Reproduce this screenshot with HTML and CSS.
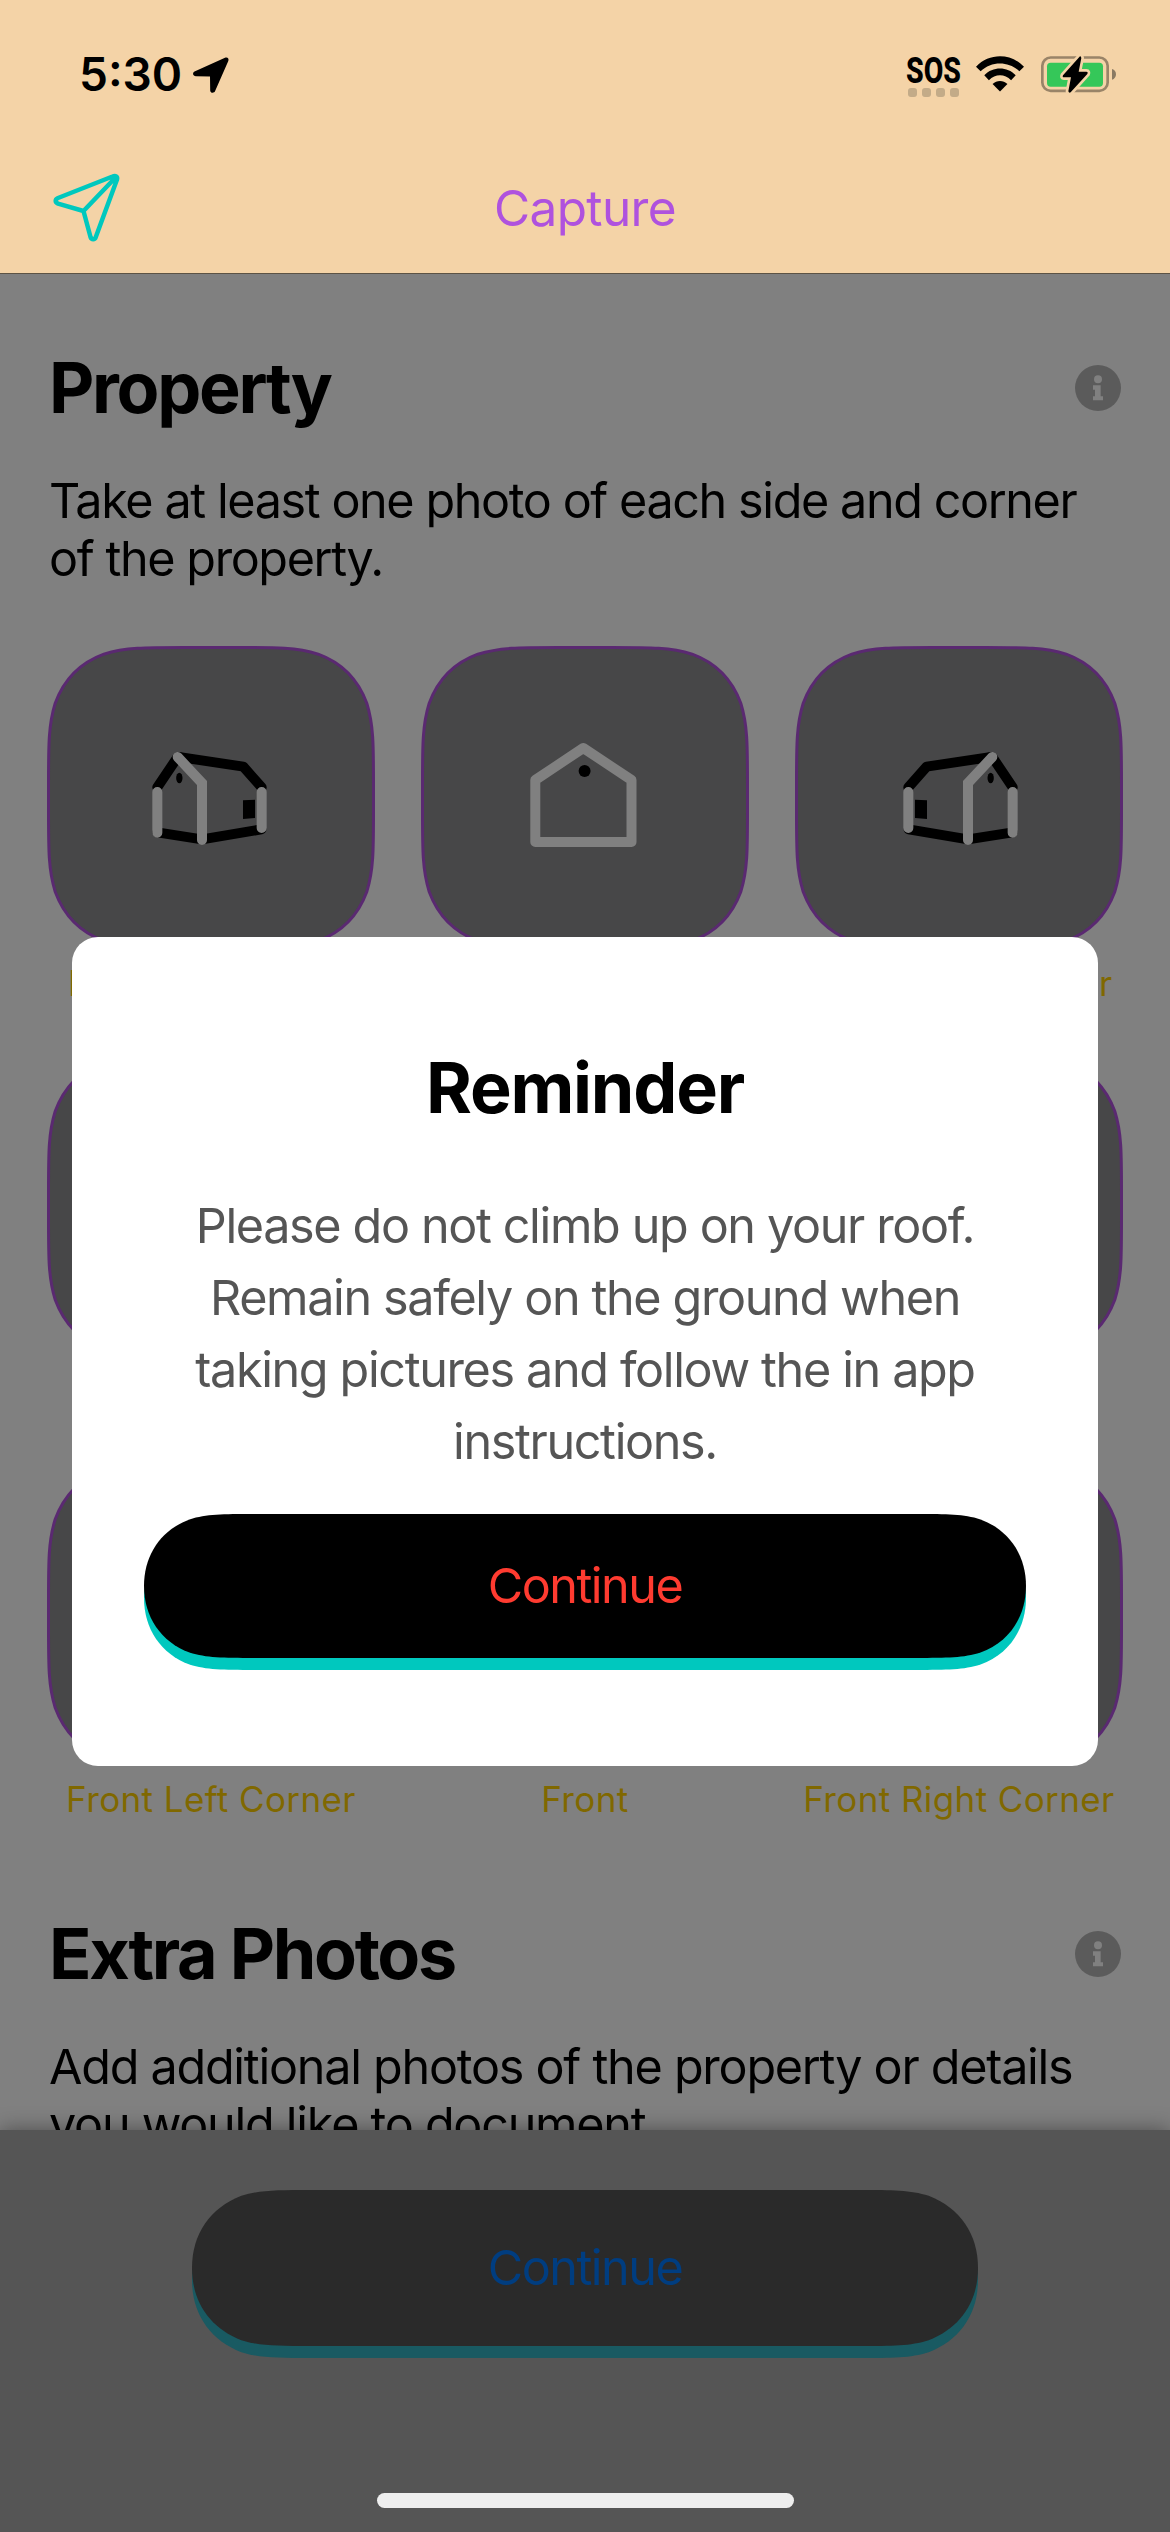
FILE: index.html
```html
<!DOCTYPE html>
<html lang="en">
<head>
<meta charset="utf-8">
<title>Capture</title>
<link rel="stylesheet" href="styles.css">
</head>
<body>
<svg class="defs" aria-hidden="true">
  <symbol id="tile" viewBox="0 0 328 303">
    <path class="tile-shape" d="M137.6 1.5H190.4C230 1.5 249.8 1.5 271.2 8.2C294.4 16.7 311.3 34.1 319.8 57.3C326.5 78.7 326.5 98.5 326.5 138V165C326.5 204.5 326.5 224.3 319.8 245.7C311.3 268.9 294.4 286.3 271.2 294.8C249.8 301.5 230 301.5 190.4 301.5H137.6C98 301.5 78.2 301.5 56.8 294.8C33.6 286.3 16.7 268.9 8.2 245.7C1.5 224.3 1.5 204.5 1.5 165V138C1.5 98.5 1.5 78.7 8.2 57.3C16.7 34.1 33.6 16.7 56.8 8.2C78.2 1.5 98 1.5 137.6 1.5Z"/>
  </symbol>
  <symbol id="house-corner" viewBox="0 0 328 303">
    <g transform="translate(83 84) scale(.33333)">
      <path class="wall-dark" d="M82 172L143 81L155 82L340 110L395 172M82 307L216 328L394 298"/>
      <ellipse cx="148" cy="144" rx="9.500" ry="16"/>
      <path d="M339 211L375 209V264L339 267Z"/>
      <path class="wall-light" d="M82 186V308M143 81L216 159V330M395 186V294"/>
    </g>
  </symbol>
  <symbol id="house-front" viewBox="0 0 328 303">
    <path class="front-wall" d="M162.300 102L114.300 134V196H210.500V134Z"/>
    <circle cx="163.600" cy="125" r="6"/>
  </symbol>
  <symbol id="info" viewBox="0 0 138 138">
    <circle class="info-disc" cx="69" cy="69" r="69"/>
    <circle class="info-mark" cx="69" cy="43" r="12"/>
    <path class="info-mark" d="M54 61H77V94H84V106H54V94H60V74H54Z"/>
  </symbol>
</svg>

<header class="top">
  <div class="status">
    <div class="clock">
      <span class="time">5:30</span>
      <svg class="location" viewBox="0 0 36 36"><path d="M1.500 14.500L32 .7C34.500 -.2 36.300 1.500 35.300 4L22 34.300C21 36.500 17.300 36.200 17.200 33.400L17 19.400L3 19.200C-.3 19 -.8 15.700 1.500 14.500Z"/></svg>
    </div>
    <div class="signals">
      <svg class="sos" viewBox="0 0 56 44">
        <text class="sos-text" x="0" y="27" textLength="55" lengthAdjust="spacingAndGlyphs">SOS</text>
        <g class="sos-dots"><rect x="2" y="32" width="9" height="9" rx="3"/><rect x="16" y="32" width="9" height="9" rx="3"/><rect x="30" y="32" width="9" height="9" rx="3"/><rect x="44" y="32" width="9" height="9" rx="3"/></g>
      </svg>
      <svg class="wifi" viewBox="0 0 145 108">
        <path d="M0 32C40 -10 105 -10 145 32L131 46C99 14 46 14 14 46Z"/>
        <path d="M25 58C51 31 94 31 120 58L106 73C87 53 58 53 39 73Z"/>
        <path d="M50 84C63 72 82 72 95 84L72.500 107Z"/>
      </svg>
      <svg class="battery" viewBox="0 0 225 111">
        <rect class="battery-case" x="4" y="4.500" width="196" height="100" rx="25"/>
        <path class="battery-nub" d="M213 39C229 43 229 67 213 71Z"/>
        <rect class="battery-level" x="18" y="20" width="168" height="72" rx="11"/>
        <path class="bolt" d="M117 1L66 58Q63 64 69 64H90L82 106Q84 112 89 109L139 54Q142 47 136 47H113L121 6Q120 0 117 1Z"/>
      </svg>
    </div>
  </div>
  <div class="nav">
    <svg class="plane" viewBox="0 0 72 72"><path d="M60.500 4.500L6 26C2.800 27.500 3 30.300 6 31.600L31.500 39L38.500 65C39.500 68 42.800 68 43.800 65L65 7.500C65.800 4.500 63.500 3.200 60.500 4.500ZM64 5L31.500 39"/></svg>
    <h1 class="nav-title">Capture</h1>
  </div>
</header>

<main class="content">
  <div class="heading">
    <h2 class="title">Property</h2>
    <svg class="info"><use href="#info"/></svg>
  </div>
  <p class="copy">Take at least one photo of each side and corner<br>of the property.</p>
  <div class="grid">
    <div class="cell"><svg class="tile"><use href="#tile"/><use href="#house-corner"/></svg><span class="label">Back Left Corner</span></div>
    <div class="cell"><svg class="tile"><use href="#tile"/><use href="#house-front"/></svg></div>
    <div class="cell"><svg class="tile"><use href="#tile"/><use class="mirror" href="#house-corner"/></svg><span class="label">Back Right Corner</span></div>
    <div class="cell"><svg class="tile"><use href="#tile"/></svg></div>
    <div class="cell"></div>
    <div class="cell"><svg class="tile"><use href="#tile"/></svg></div>
    <div class="cell"><svg class="tile"><use href="#tile"/></svg><span class="label">Front Left Corner</span></div>
    <div class="cell"><svg class="tile"><use href="#tile"/></svg><span class="label">Front</span></div>
    <div class="cell"><svg class="tile"><use href="#tile"/></svg><span class="label">Front Right Corner</span></div>
  </div>
  <div class="heading heading-extra">
    <h2 class="title">Extra Photos</h2>
    <svg class="info"><use href="#info"/></svg>
  </div>
  <p class="copy copy-extra">Add additional photos of the property or details<br>you would like to document.</p>
</main>

<footer class="footer">
  <div class="footer-button">
    <svg class="button-shape" viewBox="0 0 786 168">
      <path class="footer-shadow" transform="translate(0 12)" d="M119 0H667C701 0 718 0 736.700 5.800C768 18 786 44 786 78C786 112 768 138 736.700 150.200C718 156 701 156 667 156H119C85 156 68 156 49.300 150.200C18 138 0 112 0 78C0 44 18 18 49.300 5.800C68 0 85 0 119 0Z"/>
      <path class="footer-face" d="M119 0H667C701 0 718 0 736.700 5.800C768 18 786 44 786 78C786 112 768 138 736.700 150.200C718 156 701 156 667 156H119C85 156 68 156 49.300 150.200C18 138 0 112 0 78C0 44 18 18 49.300 5.800C68 0 85 0 119 0Z"/>
    </svg>
    <span class="button-text footer-text">Continue</span>
  </div>
  <div class="home-bar"></div>
</footer>

<section class="modal">
  <h2 class="modal-title">Reminder</h2>
  <p class="modal-copy">Please do not climb up on your roof.<br>Remain safely on the ground when<br>taking pictures and follow the in app<br>instructions.</p>
  <div class="modal-button">
    <svg class="button-shape" viewBox="0 0 882 156">
      <path class="modal-shadow" transform="translate(0 12)" d="M110 0H772C803.600 0 819.500 0 836.500 5.400C865 16 882 41 882 72C882 103 865 128 836.500 138.600C819.500 144 803.600 144 772 144H110C78.400 144 62.500 144 45.500 138.600C17 128 0 103 0 72C0 41 17 16 45.500 5.400C62.500 0 78.400 0 110 0Z"/>
      <path d="M110 0H772C803.600 0 819.500 0 836.500 5.400C865 16 882 41 882 72C882 103 865 128 836.500 138.600C819.500 144 803.600 144 772 144H110C78.400 144 62.500 144 45.500 138.600C17 128 0 103 0 72C0 41 17 16 45.500 5.400C62.500 0 78.400 0 110 0Z"/>
    </svg>
    <span class="button-text modal-text">Continue</span>
  </div>
</section>
</body>
</html>
```
FILE: styles.css
```css
* { box-sizing: border-box; }
body {
  margin: 0;
  width: 1170px;
  height: 2532px;
  display: flex;
  flex-direction: column;
  position: relative;
  overflow: hidden;
  background: #808080;
  color: #000;
  font-family: Inter, "Liberation Sans", sans-serif;
}
h1, h2, p { margin: 0; }
svg { display: block; flex: none; overflow: visible; }
.defs { position: absolute; width: 0; height: 0; }

.top {
  height: 274px;
  flex: none;
  background: #f4d3a7;
  border-bottom: 1px solid #5c5345;
}
.status {
  height: 150px;
  display: flex;
  justify-content: space-between;
  padding: 0 54px 0 79px;
}
.clock { display: flex; gap: 12px; padding-top: 44px; }
.time {
  width: 102px;
  font-size: 46px;
  line-height: 60px;
  font-weight: 600;
  white-space: nowrap;
}
.location { width: 36px; height: 36px; margin-top: 13px; }
.signals { display: flex; padding-top: 56px; }
.sos { width: 56px; height: 44px; margin-right: 14px; }
.sos-text { font: 800 37px Roboto, sans-serif; }
.sos-dots { fill: #c3ab88; }
.wifi { width: 48px; height: 36px; margin-right: 17px; }
.battery { width: 75px; height: 37px; }
.battery-case { fill: none; stroke: #998468; stroke-width: 8; }
.battery-nub { fill: #8a7a63; }
.battery-level { fill: #35c759; }
.bolt { stroke: #f4d3a7; stroke-width: 16; paint-order: stroke; stroke-linejoin: round; }

.nav {
  height: 122px;
  display: grid;
  grid-template-columns: 1fr auto 1fr;
  padding: 0 52px;
}
.plane {
  width: 72px;
  height: 72px;
  margin-top: 22px;
  fill: none;
  stroke: #00c8be;
  stroke-width: 4.500;
  stroke-linejoin: round;
}
.nav-title {
  padding-top: 28px;
  font-size: 49.500px;
  line-height: 60px;
  font-weight: 400;
  letter-spacing: -.6px;
  color: #af52de;
}

.content {
  height: 1856px;
  flex: none;
  overflow: hidden;
  padding: 74px 47px 0;
}
.heading {
  height: 80px;
  display: flex;
  justify-content: space-between;
  align-items: center;
  padding: 0 2px 0 2px;
}
.title {
  font-size: 70px;
  line-height: 80px;
  font-weight: 650;
  letter-spacing: -2.300px;
}
.info { width: 46px; height: 46px; }
.info-disc { fill: #5b5b5b; }
.info-mark { fill: #808080; }
.copy {
  padding: 44px 2px 0;
  height: 218px;
  font-size: 48.500px;
  line-height: 58px;
  letter-spacing: -1.400px;
  white-space: nowrap;
}
.grid {
  display: grid;
  grid-template-columns: repeat(3, 328px);
  grid-auto-rows: 408px;
  column-gap: 46px;
}
.cell { display: flex; flex-direction: column; align-items: center; }
.tile { width: 328px; height: 303px; }
.tile-shape { fill: #474748; stroke: #5a2971; stroke-width: 3; }
.wall-dark { fill: none; stroke: #000; stroke-width: 30; stroke-linejoin: round; stroke-linecap: round; }
.wall-light { fill: none; stroke: #808080; stroke-width: 30; stroke-linejoin: miter; stroke-linecap: round; }
.front-wall { fill: none; stroke: #808080; stroke-width: 10; stroke-linejoin: round; }
.mirror { transform: translateX(328px) scaleX(-1); }
.label {
  padding-top: 12px;
  font-size: 35px;
  line-height: 44px;
  letter-spacing: .4px;
  color: #806800;
  white-space: nowrap;
}
.heading-extra { margin-top: 44px; }
.copy-extra { height: auto; letter-spacing: -1.250px; }

.footer {
  flex: 1;
  display: flex;
  flex-direction: column;
  align-items: center;
  justify-content: space-between;
  padding: 60px 0 24px;
  background: #555;
  box-shadow: 0 0 20px rgba(0, 0, 0, .4);
}
.footer-button { display: grid; width: 786px; height: 168px; }
.button-shape { grid-area: 1 / 1; width: 100%; height: 100%; }
.button-text {
  grid-area: 1 / 1;
  justify-self: center;
  font-size: 48.500px;
  line-height: 60px;
  letter-spacing: -1.500px;
}
.footer-text { margin-top: 48px; color: #003d80; }
.footer-shadow { fill: #195a62; }
.footer-face { fill: #2a2a2a; }
.home-bar { width: 417px; height: 15px; border-radius: 8px; background: #eee; }

.modal {
  position: absolute;
  left: 72px;
  top: 937px;
  width: 1026px;
  height: 829px;
  padding: 109px 72px 0;
  border-radius: 26px;
  background: #fff;
  text-align: center;
}
.modal-title {
  font-size: 70px;
  line-height: 84px;
  font-weight: 700;
  letter-spacing: -1.200px;
}
.modal-copy {
  height: 384px;
  padding-top: 60px;
  font-size: 48.500px;
  line-height: 72px;
  letter-spacing: -1.350px;
  color: #555;
  white-space: nowrap;
}
.modal-button { display: grid; height: 156px; }
.modal-shadow { fill: #00c8be; }
.modal-text { margin-top: 42px; color: #ff3b30; }
```
